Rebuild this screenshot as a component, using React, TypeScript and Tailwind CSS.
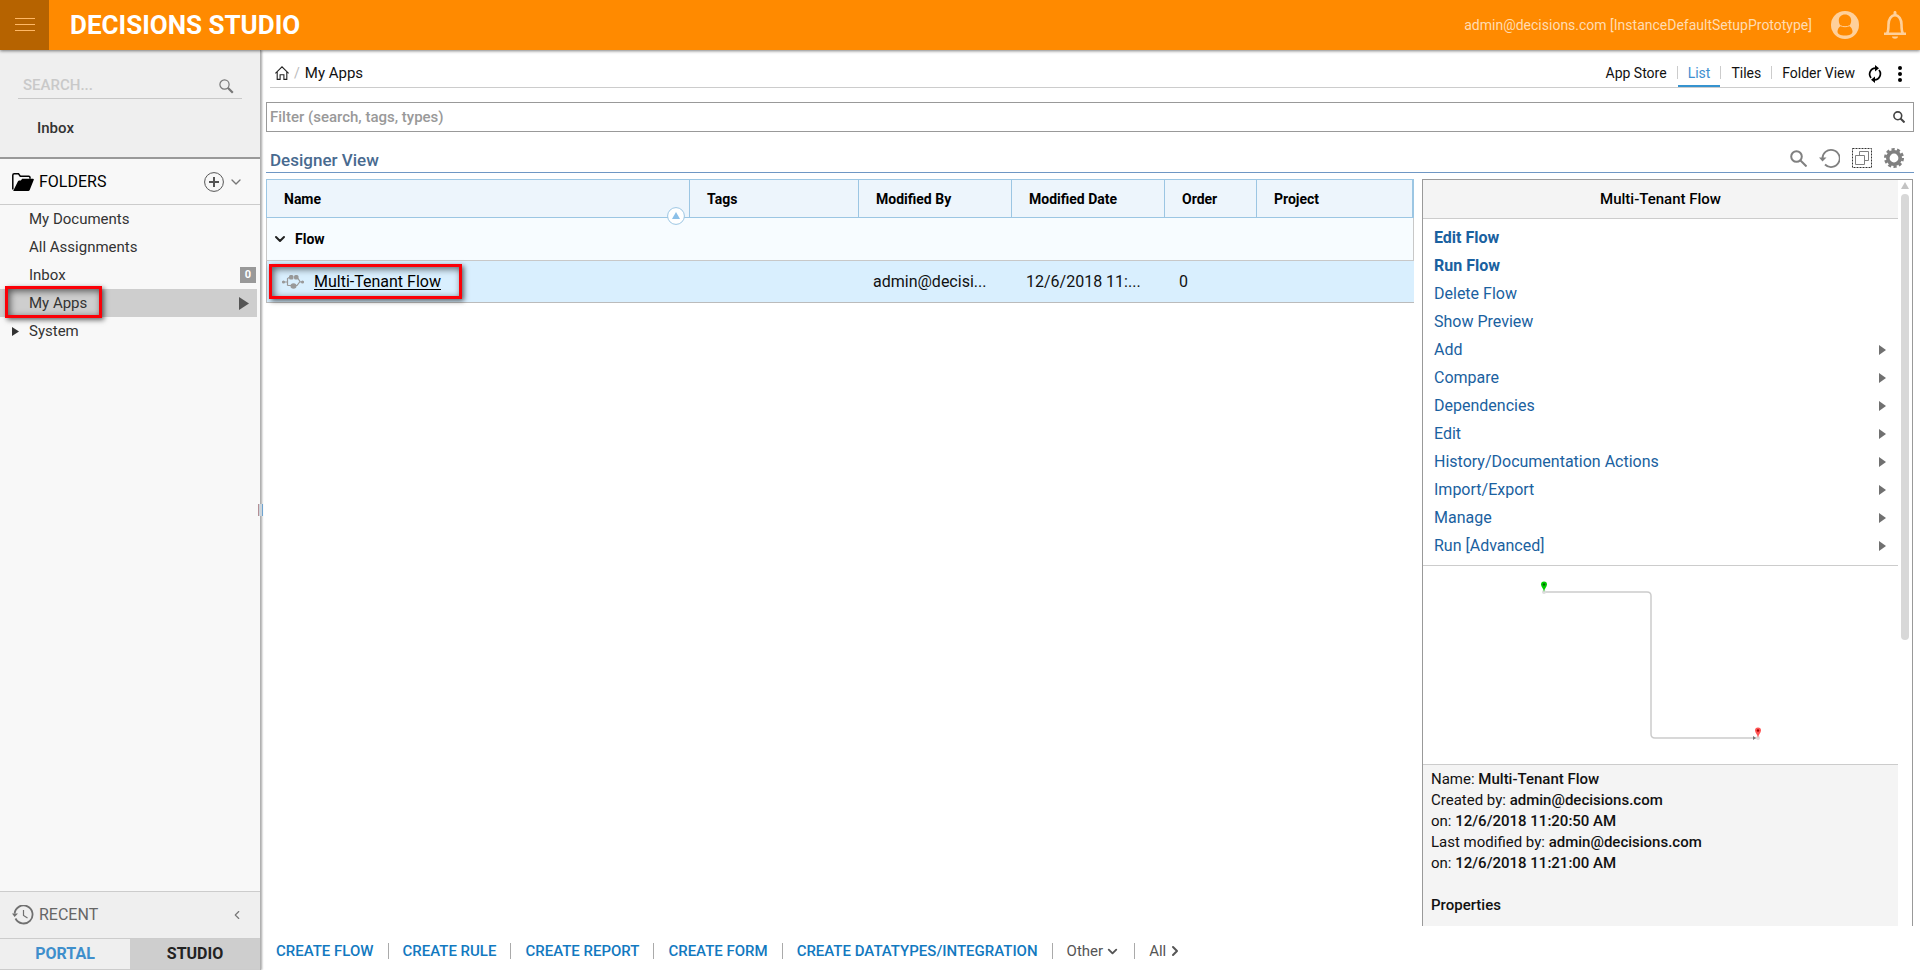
import type { ReactNode } from 'react';
import { ChevronDown, ChevronLeft, ChevronRight } from 'lucide-react';

const folders = [
  { name: 'My Documents' },
  { name: 'All Assignments' },
  { name: 'Inbox', count: 0 },
  { name: 'My Apps', active: true },
  { name: 'System', expandable: true },
];

const columns = ['Name', 'Tags', 'Modified By', 'Modified Date', 'Order', 'Project'];

const actions = [
  { label: 'Edit Flow', primary: true },
  { label: 'Run Flow', primary: true },
  { label: 'Delete Flow' },
  { label: 'Show Preview' },
  { label: 'Add', sub: true },
  { label: 'Compare', sub: true },
  { label: 'Dependencies', sub: true },
  { label: 'Edit', sub: true },
  { label: 'History/Documentation Actions', sub: true },
  { label: 'Import/Export', sub: true },
  { label: 'Manage', sub: true },
  { label: 'Run [Advanced]', sub: true },
];

const details = [
  { label: 'Name:', value: 'Multi-Tenant Flow' },
  { label: 'Created by:', value: 'admin@decisions.com' },
  { label: 'on:', value: '12/6/2018 11:20:50 AM' },
  { label: 'Last modified by:', value: 'admin@decisions.com' },
  { label: 'on:', value: '12/6/2018 11:21:00 AM' },
];

const createLinks = ['CREATE FLOW', 'CREATE RULE', 'CREATE REPORT', 'CREATE FORM', 'CREATE DATATYPES/INTEGRATION'];

/* Red callout frame laid over the element it points at */
function Callout({ className }: { className: string }) {
  return (
    <span
      aria-hidden="true"
      className={`pointer-events-none absolute border-3 border-[#fb0007] shadow-[2px_2px_5px_rgba(0,0,0,0.6),inset_2px_2px_7px_rgba(0,0,0,0.6)] ${className}`}
    />
  );
}

function Header() {
  return (
    <header className="relative z-20 flex h-[50px] shrink-0 items-center bg-[#ff8a00] shadow-[0_1px_3px_rgba(0,0,0,0.5)]">
      <button type="button" aria-label="Menu" className="flex h-full w-[49px] items-center justify-center bg-[#b66300]">
        <svg width="20" height="14" viewBox="0 0 20 14" stroke="#ffb866" strokeWidth="1" aria-hidden="true">
          <path d="M0 .5h20M0 6.5h20M0 12.5h20" />
        </svg>
      </button>
      <h1 className="ml-[21px] flex-1 text-[26px] leading-[50px] font-bold text-white">DECISIONS STUDIO</h1>
      <span className="text-[14px] text-[#ffdcb2]">admin@decisions.com [InstanceDefaultSetupPrototype]</span>
      <button type="button" aria-label="Account" className="ml-[19px]">
        <svg width="28" height="28" viewBox="0 0 28 28" aria-hidden="true">
          <circle cx="14" cy="14" r="14" fill="#ffd09a" />
          <path d="M14 3.500c3.600 0 6.200 2.400 6.200 6 0 2.300-.8 4.200-2 5.500 2 1.200 3.300 3.300 3.300 5.500 0 2.600-3 4-7.500 4s-7.500-1.400-7.500-4c0-2.200 1.300-4.300 3.300-5.500-1.200-1.300-2-3.200-2-5.500 0-3.600 2.600-6 6.200-6z" fill="#ff8a00" />
          <path d="M9.300 14.600c2.300 1.500 7.100 1.500 9.400 0" fill="none" stroke="#ffd09a" strokeWidth="1" />
        </svg>
      </button>
      <button type="button" aria-label="Notifications" className="mr-[13px] ml-6">
        <svg width="24" height="28" viewBox="0 0 24 28" aria-hidden="true">
          <path d="M1 22.700h22M4 22.500c1.500-2 1.500-4 1.500-9 0-5 2.500-9.300 6.500-9.300s6.500 4.300 6.500 9.300c0 5 0 7 1.500 9" fill="none" stroke="#ffd09a" strokeWidth="2.600" />
          <path d="M10.500 1.500c0-2 3-2 3 0v3h-3zM9 25.500h6c0 3-6 3-6 0z" fill="#ffd09a" />
        </svg>
      </button>
    </header>
  );
}

function Sidebar() {
  return (
    <aside className="relative z-10 flex w-[261px] shrink-0 flex-col border-r border-[#b0b0b0] bg-[#f8f8f8] shadow-[1px_0_2px_rgba(0,0,0,0.35)]">
      <div className="h-[109px] border-b-2 border-[#999] bg-[#efefef] px-[18px] pt-5">
        <div className="flex h-[29px] items-center border-b border-[#c8c8c8] pr-2 pl-[5px]">
          <input
            aria-label="Search"
            placeholder="SEARCH..."
            className="min-w-0 flex-1 pt-[2px] text-[15px] font-medium outline-none placeholder:text-[#c9c9c9]"
          />
          <svg width="15" height="15" viewBox="0 0 15 15" fill="none" aria-hidden="true" className="mt-1">
            <circle cx="5.500" cy="5.500" r="4.600" stroke="#777" strokeWidth="1.200" />
            <path d="M8.800 8.800l5 5" stroke="#777" strokeWidth="2.200" />
          </svg>
        </div>
        <a href="#inbox" className="mt-[18px] ml-[19px] inline-block text-[15px] leading-[22px] font-medium text-[#333]">
          Inbox
        </a>
      </div>

      <div className="flex h-[46px] items-center border-b border-[#ccc] pr-4 pl-3">
        <svg width="22" height="18" viewBox="0 0 22 18" aria-hidden="true">
          <path d="M.8 16.500V2.200Q.8.800 2.200.800h4.300l1.800 2.400h8.500q1.200 0 1.200 1.200v1.300" fill="none" stroke="#000" strokeWidth="1.500" />
          <path d="M1.500 17.300 6 8.200q.4-.8 1.300-.8h1.500l1.400-1.600h10.600q1.500 0 .9 1.300l-4 10q-.4.900-1.400.9H2q-1 0-.5-.7z" fill="#000" />
        </svg>
        <h2 className="ml-[5px] flex-1 text-[16px] text-black">FOLDERS</h2>
        <button type="button" aria-label="Add folder" className="mr-1">
          <svg width="20" height="20" viewBox="0 0 20 20" fill="none" stroke="#555" aria-hidden="true">
            <circle cx="10" cy="10" r="9.400" />
            <path d="M10 5v10M5 10h10" strokeWidth="2" />
          </svg>
        </button>
        <ChevronDown size={16} strokeWidth={2} color="#777" />
      </div>

      <nav className="flex-1 pr-[3px]">
        {folders.map((f) => (
          <a
            key={f.name}
            href="#folder"
            className={`relative flex h-7 items-center pl-[29px] text-[15px] text-[#333] ${f.active ? 'bg-[#cecece]' : ''}`}
          >
            {f.expandable && (
              <svg width="7" height="9" viewBox="0 0 7 9" className="absolute left-3" aria-hidden="true">
                <path d="M0 0l7 4.500L0 9z" fill="#333" />
              </svg>
            )}
            <span className="flex-1">{f.name}</span>
            {f.count !== undefined && (
              <span className="mr-px w-4 bg-[#999] text-center text-[11px] leading-4 font-bold text-white">{f.count}</span>
            )}
            {f.active && (
              <>
                <svg width="10" height="13" viewBox="0 0 10 13" className="mr-2" aria-hidden="true">
                  <path d="M0 0l10 6.500L0 13z" fill="#555" />
                </svg>
                <Callout className="-top-[3px] left-[5px] h-8 w-[97px]" />
              </>
            )}
          </a>
        ))}
      </nav>

      <div className="flex h-[47px] items-center border-t border-[#ccc] bg-[#efefef] pr-4 pl-3">
        <svg width="22" height="20" viewBox="0 0 22 20" fill="none" stroke="#707070" aria-hidden="true">
          <path d="M2.600 8.500A9 9 0 1 1 3.500 13.500" strokeWidth="1.800" />
          <path d="M11.500 5v5.500l4 2.500" strokeWidth="1.200" />
          <path d="M0 8.500h6L2.600 12z" fill="#707070" stroke="none" />
        </svg>
        <h2 className="ml-[5px] flex-1 text-[16px] text-[#666]">RECENT</h2>
        <ChevronLeft size={14} strokeWidth={2} color="#777" />
      </div>
      <div className="flex h-8 shrink-0 border-t border-b border-[#ccc] text-[16px] font-bold">
        <a href="#portal" className="flex flex-1 items-center justify-center bg-[#efefef] text-[#3f8fcc]">
          PORTAL
        </a>
        <a href="#studio" className="flex flex-1 items-center justify-center bg-[#cecece] text-[#222]">
          STUDIO
        </a>
      </div>

      {/* Splitter grip */}
      <span className="absolute top-[454px] -right-[3px] h-3 w-[5px] border-r border-l border-r-[#6fa3cf] border-l-[#b58f95] bg-[#ccd5dc]" />
    </aside>
  );
}

function ViewTab({ children, active }: { children: ReactNode; active?: boolean }) {
  return (
    <a
      href="#view"
      className={`flex h-[26px] items-center border-b-2 px-[10px] ${active ? 'border-[#3593cf] text-[#3f8fd0]' : 'border-transparent'}`}
    >
      {children}
    </a>
  );
}

function Divider() {
  return <span className="mb-[3px] h-[13px] w-px bg-[#ccc]" />;
}

function Toolbar() {
  return (
    <div className="mr-1 ml-1 flex h-[38px] items-end border-b border-[#ccc] text-[14px] text-[#111]">
      <div className="flex h-[26px] flex-1 items-center pb-[2px] pl-[5px]">
        <svg width="14" height="14" viewBox="0 0 14 14" fill="none" stroke="#222" strokeWidth="1.100" aria-label="Home">
          <path d="M.4 7.400 7 .8l6.600 6.600M2.200 6v7.400h2.900V8.800h3.800v4.600h2.900V6" />
        </svg>
        <span className="mx-[5px] text-[#bbb]">/</span>
        <span className="text-[15px]">My Apps</span>
      </div>
      <nav className="flex items-center">
        <ViewTab>App Store</ViewTab>
        <Divider />
        <ViewTab active>List</ViewTab>
        <Divider />
        <ViewTab>Tiles</ViewTab>
        <Divider />
        <ViewTab>Folder View</ViewTab>
      </nav>
      <button type="button" aria-label="Refresh" className="mb-1 ml-[3px]">
        <svg width="14" height="18" viewBox="0 0 14 18" fill="none" stroke="#000" strokeWidth="1.700" aria-hidden="true">
          <path d="M3 13A6 6 0 0 1 7.500 3.200M11 5a6 6 0 0 1-4.500 9.800" />
          <path d="M7 0v6.500l4-3.300zM7 18v-6.500l-4 3.300z" fill="#000" stroke="none" />
        </svg>
      </button>
      <button type="button" aria-label="More" className="mr-2 mb-[5px] ml-4">
        <svg width="4" height="16" viewBox="0 0 4 16" aria-hidden="true">
          <circle cx="2" cy="2" r="2" />
          <circle cx="2" cy="8" r="2" />
          <circle cx="2" cy="14" r="2" />
        </svg>
      </button>
    </div>
  );
}

function ViewHeader() {
  return (
    <div className="flex h-[41px] items-center border-b border-[#6f97c4] pr-[10px] pl-1">
      <h2 className="flex-1 pt-4 text-[17px] leading-[22px] font-medium text-[#486a8f]">Designer View</h2>
      <div className="flex items-center gap-3 pt-3">
        <svg width="17" height="17" viewBox="0 0 17 17" fill="none" stroke="#808080" strokeWidth="2" aria-label="Search">
          <circle cx="6.500" cy="6.500" r="5.300" />
          <path d="M10.500 10.500l6 6" />
        </svg>
        <svg width="21" height="20" viewBox="0 0 21 20" fill="none" stroke="#808080" strokeWidth="1.800" aria-label="Reset">
          <path d="M3.500 11A8.600 8.600 0 1 1 6 16.500" />
          <path d="M0 9.500h7.500l-4 4z" fill="#808080" stroke="none" />
        </svg>
        <svg width="20" height="20" viewBox="0 0 20 20" fill="none" stroke="#333" aria-label="Select">
          <path d="M.5.500h19v19H.5z" strokeDasharray="2 1" />
          <path d="M7.500 7.500V3.500h9v9h-4M3.500 7.500h9v9h-9z" stroke="#808080" />
        </svg>
        <svg width="20" height="20" viewBox="0 0 20 20" aria-label="Settings">
          <circle cx="10" cy="10" r="6.200" fill="none" stroke="#808080" strokeWidth="3.600" />
          <circle cx="10" cy="10" r="8.700" fill="none" stroke="#808080" strokeWidth="2.600" strokeDasharray="3.166 2.300" />
        </svg>
      </div>
    </div>
  );
}

function FlowTable() {
  return (
    <div className="min-w-0 flex-1">
      <table className="w-full table-fixed border-separate border-spacing-0 text-left">
        <colgroup>
          <col />
          <col className="w-[169px]" />
          <col className="w-[153px]" />
          <col className="w-[153px]" />
          <col className="w-[92px]" />
          <col className="w-[157px]" />
        </colgroup>
        <thead>
          <tr className="h-[39px] bg-[#edf5fc] text-[14px] text-black">
            {columns.map((c, i) => (
              <th
                key={c}
                scope="col"
                className="relative border-t border-r border-b border-[#9cc6e3] pt-[2px] pl-[17px] font-bold first:border-l last:border-r-2"
              >
                {c}
                {i === 0 && (
                  <svg width="18" height="18" viewBox="0 0 18 18" className="absolute right-1 -bottom-2" aria-label="Sorted ascending">
                    <circle cx="9" cy="9" r="8.400" fill="#fff" stroke="#9cc6e3" />
                    <path d="M9 5l4 7H5z" fill="#8cc0e8" />
                  </svg>
                )}
              </th>
            ))}
          </tr>
        </thead>
        <tbody>
          <tr className="h-[43px] bg-[#f7fcff] text-black">
            <td colSpan={6} className="border-r border-b border-l border-[#c8c8c8] pl-[5px]">
              <button type="button" className="flex items-center gap-[7px] text-[14px] font-bold">
                <ChevronDown size={16} strokeWidth={3} color="#222" />
                Flow
              </button>
            </td>
          </tr>
          <tr className="h-[42px] bg-[#d9effe] text-[16px] text-[#111]">
            <td className="relative border-b border-l border-[#bbb]">
              <div className="flex items-center gap-[10px] pl-[15px]">
                <svg width="22" height="14" viewBox="0 0 22 14" fill="none" stroke="#999" aria-hidden="true">
                  <path d="M0 7h6M5.500 10.500V3.500L8 2M15 2l3 4.500-3 4H5.500M18 7h4" strokeWidth="1.200" />
                  <rect x="7" y="0" width="4.500" height="4.500" rx="1.500" fill="#999" stroke="none" />
                  <rect x="12" y="0" width="4.500" height="4.500" rx="1.500" fill="#999" stroke="none" />
                  <ellipse cx="11.500" cy="11" rx="3" ry="2.700" fill="#999" stroke="none" />
                  <circle cx="1.500" cy="7" r="1.500" fill="#999" stroke="none" />
                  <circle cx="20.500" cy="7" r="1.500" fill="#999" stroke="none" />
                </svg>
                <a href="#flow" className="text-black underline underline-offset-2">
                  Multi-Tenant Flow
                </a>
              </div>
              <Callout className="top-[3px] left-[2px] h-[35px] w-[193px]" />
            </td>
            <td className="border-b border-[#bbb]" />
            <td className="border-b border-[#bbb] pl-[14px]">admin@decisi...</td>
            <td className="border-b border-[#bbb] pl-[14px]">12/6/2018 11:...</td>
            <td className="border-b border-[#bbb] pl-[14px]">0</td>
            <td className="border-b border-[#bbb]" />
          </tr>
        </tbody>
      </table>
    </div>
  );
}

function FlowPreview() {
  return (
    <div className="flex h-[199px] justify-center border-b border-[#ccc] pr-[18px]">
      <svg width="224" height="198" viewBox="0 0 224 198" aria-label="Flow preview">
        <path d="M4 26h103q4 0 4 4v138q0 4 4 4h103" fill="none" stroke="#ccc" strokeWidth="1.500" />
        <circle cx="4" cy="26" r="2" fill="#ddd" />
        <path d="M4 26c0-3-3-5-3-7.500a3 3 0 0 1 6 0C7 21 4 23 4 26z" fill="#0c0" />
        <circle cx="4" cy="18.500" r="1.200" fill="#060" />
        <circle cx="218" cy="172" r="2" fill="#ddd" />
        <path d="M213 170l3 2-3 2z" fill="#777" />
        <path d="M218 172c0-3-3-5-3-7.500a3 3 0 0 1 6 0c0 2.500-3 4.500-3 7.500z" fill="#f55" />
        <circle cx="218" cy="164.500" r="1.200" fill="#a00" />
      </svg>
    </div>
  );
}

function DetailPanel() {
  return (
    <section className="flex w-[491px] shrink-0 overflow-hidden border-t border-r border-l border-[#999]">
      <div className="flex min-w-0 flex-1 flex-col">
        <h3 className="h-[39px] shrink-0 border-b border-[#ccc] bg-[#f4f4f4] text-center text-[15px] leading-[38px] font-medium text-black">
          Multi-Tenant Flow
        </h3>
        <ul className="shrink-0 border-b border-[#ccc] pt-[5px] pb-[5px] text-[16px] text-[#1a61a0]">
          {actions.map((a) => (
            <li key={a.label}>
              <a
                href="#action"
                className={`flex h-7 items-center justify-between pr-3 pl-[11px] ${a.primary ? 'font-bold' : ''}`}
              >
                {a.label}
                {a.sub && (
                  <svg width="7" height="10" viewBox="0 0 7 10" aria-hidden="true">
                    <path d="M0 0l7 5-7 5z" fill="#707070" />
                  </svg>
                )}
              </a>
            </li>
          ))}
        </ul>
        <FlowPreview />
        <div className="flex-1 bg-[#f4f4f4] px-2 pt-1 text-[15px] leading-[21px] text-[#111]">
          {details.map((d, i) => (
            <p key={i}>
              {d.label} <b className="font-medium">{d.value}</b>
            </p>
          ))}
          <h4 className="mt-[21px] font-medium">Properties</h4>
        </div>
      </div>

      {/* Scrollbar */}
      <div className="flex w-[14px] flex-col items-center gap-[5px] pt-[2px]">
        <svg width="8" height="7" viewBox="0 0 8 7" aria-hidden="true">
          <path d="M4 0l4 7H0z" fill="#c4c4c4" />
        </svg>
        <span className="h-[60%] w-2 rounded-full bg-[#d8d8d8]" />
      </div>
    </section>
  );
}

function FooterBar() {
  return (
    <footer className="flex h-11 shrink-0 items-center divide-x divide-[#aaa] pt-[6px] text-[15px] leading-4">
      {createLinks.map((l) => (
        <a key={l} href="#create" className="px-[14px] font-medium text-[#1279c0] first:pl-[10px]">
          {l}
        </a>
      ))}
      <button type="button" className="flex items-center gap-[2px] px-[14px] text-[#555]">
        Other
        <ChevronDown size={15} strokeWidth={3} />
      </button>
      <button type="button" className="flex items-center gap-px px-[14px] text-[#555]">
        All
        <ChevronRight size={16} strokeWidth={3} />
      </button>
    </footer>
  );
}

export default function App() {
  return (
    <div className="flex h-screen flex-col overflow-hidden bg-white font-[Roboto,sans-serif]">
      <Header />
      <div className="flex min-h-0 flex-1">
        <Sidebar />
        <main className="flex min-w-0 flex-1 flex-col pr-[6px] pl-[5px]">
          <Toolbar />
          <label className="mt-[14px] flex h-[30px] shrink-0 items-center border border-[#999] pr-2 pl-[3px]">
            <input
              aria-label="Filter"
              placeholder="Filter (search, tags, types)"
              className="min-w-0 flex-1 text-[15px] font-medium outline-none placeholder:text-[#999]"
            />
            <svg width="12" height="12" viewBox="0 0 12 12" fill="none" stroke="#444" strokeWidth="1.600" aria-hidden="true">
              <circle cx="4.800" cy="4.800" r="3.900" />
              <path d="M7.500 7.500l4 4" strokeWidth="2" />
            </svg>
          </label>
          <ViewHeader />
          <div className="mt-[6px] mr-px flex min-h-0 flex-1 gap-2">
            <FlowTable />
            <DetailPanel />
          </div>
          <FooterBar />
        </main>
      </div>
    </div>
  );
}
